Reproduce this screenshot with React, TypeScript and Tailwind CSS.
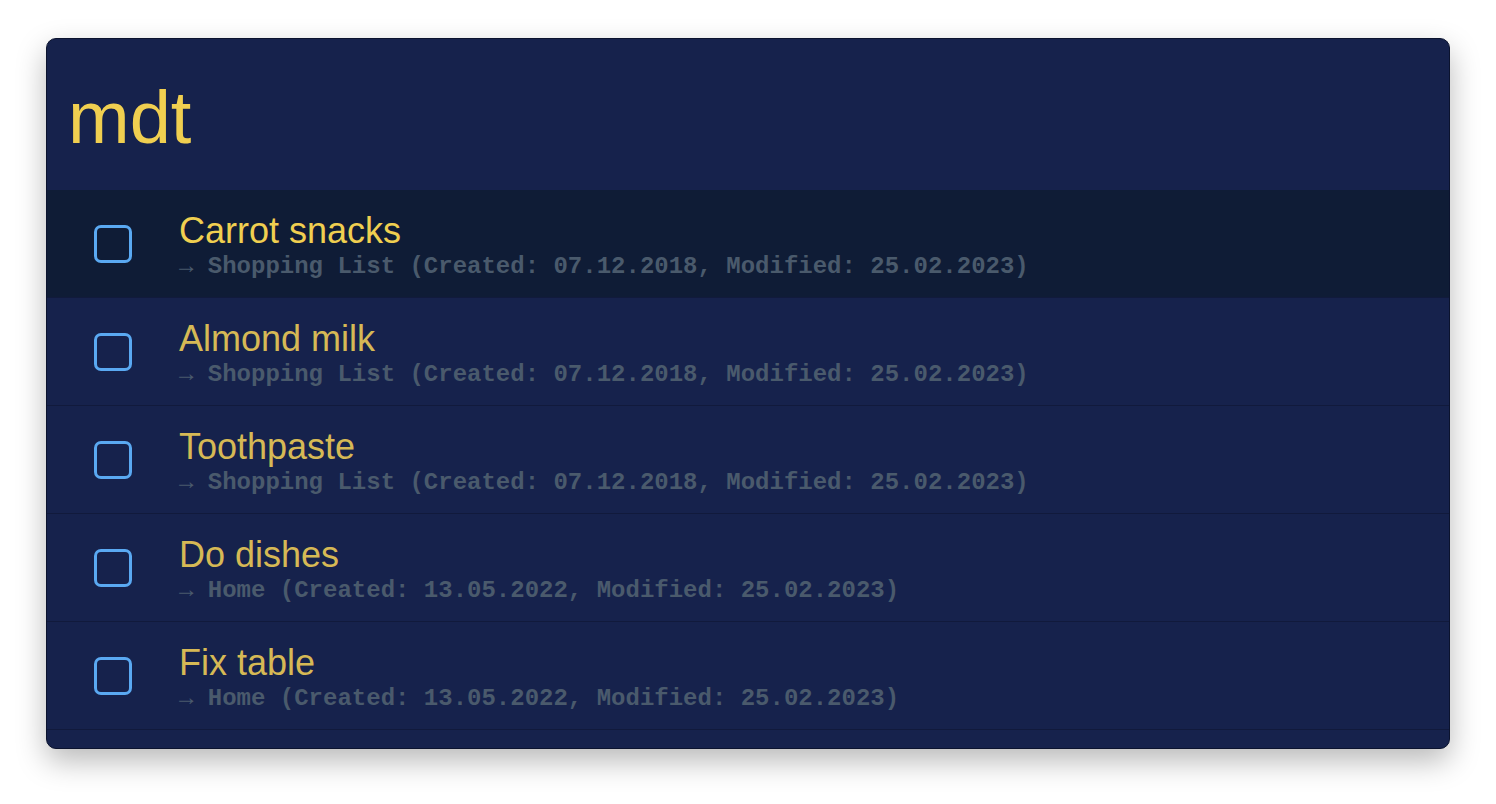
const TASKS = [
    { title: 'Carrot snacks', meta: '→ Shopping List (Created: 07.12.2018, Modified: 25.02.2023)' },
    { title: 'Almond milk', meta: '→ Shopping List (Created: 07.12.2018, Modified: 25.02.2023)' },
    { title: 'Toothpaste', meta: '→ Shopping List (Created: 07.12.2018, Modified: 25.02.2023)' },
    { title: 'Do dishes', meta: '→ Home (Created: 13.05.2022, Modified: 25.02.2023)' },
    { title: 'Fix table', meta: '→ Home (Created: 13.05.2022, Modified: 25.02.2023)' },
];

function TaskRow({ title, meta, selected }: { title: string; meta: string; selected: boolean }) {
    return (
        <div
            className={`flex items-center h-[108px] border-b border-[#111a3c] ${selected ? 'bg-[#0f1c36]' : 'bg-[#16224c]'}`}
        >
            <div className="ml-[47px] w-[38px] h-[38px] shrink-0 rounded-[7px] border-[3px] border-[#5aa9f2]" />
            <div className="ml-[47px] flex flex-col">
                <p
                    className={`mt-[3px] text-[36px] leading-[40px] font-['Liberation_Sans',Arial,sans-serif] ${selected ? 'text-[#f0cf50]' : 'text-[#d6b955]'}`}
                >
                    {title}
                </p>
                <p className="mt-[4px] text-[24px] leading-[24px] font-bold text-[#4a5a6c] font-['Liberation_Mono','Courier_New',monospace]">
                    {meta}
                </p>
            </div>
        </div>
    );
}

export default function App() {
    return (
        <div className="w-full h-[804px] bg-white pt-[38px] px-[46px]">
            <div className="w-[1404px] h-[711px] rounded-[10px] bg-[#16224c] border border-[#0b132e] overflow-hidden shadow-[0_12px_30px_rgba(0,0,0,0.28)] flex flex-col">
                <div className="h-[151px] shrink-0 pt-[42px] pl-[21px]">
                    <h1 className="text-[74px] leading-[74px] text-[#f0cf50] font-['Liberation_Sans',Arial,sans-serif]">mdt</h1>
                </div>
                {TASKS.map((task, i) => (
                    <TaskRow key={task.title} title={task.title} meta={task.meta} selected={i === 0} />
                ))}
            </div>
        </div>
    );
}
